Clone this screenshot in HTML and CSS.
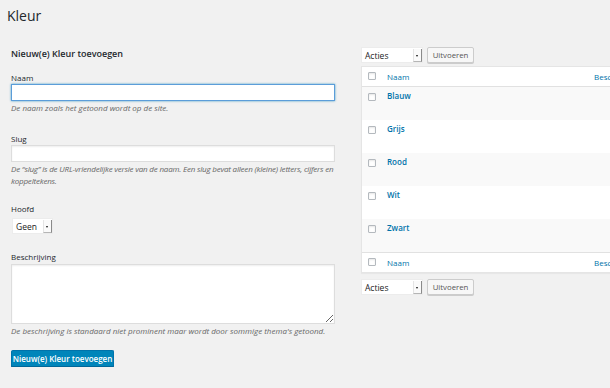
FILE: index.html
```html
<!DOCTYPE html>
<html lang="nl">
<head>
  <meta charset="UTF-8" />
  <meta name="viewport" content="width=device-width, initial-scale=1.0" />
  <title>Kleur</title>
  <link rel="stylesheet" href="styles.css">
</head>
<body>
  <div class="wrap">
    <h1 class="page-title">Kleur</h1>

    <div class="columns">
      <!-- Formulier links -->
      <div class="col-left">
        <h2 class="form-title">Nieuw(e) Kleur toevoegen</h2>

        <div class="field field-name">
          <label class="field-label">Naam</label>
          <input type="text" class="text-input is-focus" />
          <p class="desc">De naam zoals het getoond wordt op de site.</p>
        </div>

        <div class="field field-slug">
          <label class="field-label">Slug</label>
          <input type="text" class="text-input" />
          <p class="desc desc-tight">De “slug” is de URL-vriendelijke versie van de naam. Een slug bevat alleen (kleine) letters, cijfers en<br>koppeltekens.</p>
        </div>

        <div class="field field-parent">
          <label class="field-label">Hoofd</label>
          <div class="select select-parent">
            <span class="select-text">Geen</span>
            <span class="select-arrow"></span>
          </div>
        </div>

        <div class="field field-desc">
          <label class="field-label">Beschrijving</label>
          <textarea class="text-area"></textarea>
          <p class="desc">De beschrijving is standaard niet prominent maar wordt door sommige thema's getoond.</p>
        </div>

        <button class="btn-primary">Nieuw(e) Kleur toevoegen</button>
      </div>

      <!-- Lijst rechts -->
      <div class="col-right">
        <div class="tablenav">
          <div class="select select-bulk">
            <span class="select-text">Acties</span>
            <span class="select-arrow"></span>
          </div>
          <button class="btn">Uitvoeren</button>
        </div>

        <table class="list-table">
          <colgroup>
            <col class="col-cb">
            <col class="col-name">
            <col class="col-desc">
          </colgroup>
          <thead>
            <tr>
              <th class="check"><span class="checkbox"></span></th>
              <th><a href="#">Naam</a></th>
              <th><a href="#">Beschrijving</a></th>
            </tr>
          </thead>
          <tbody>
            <tr class="alt">
              <td class="check"><span class="checkbox"></span></td>
              <td class="name"><a href="#">Blauw</a></td>
              <td></td>
            </tr>
            <tr>
              <td class="check"><span class="checkbox"></span></td>
              <td class="name"><a href="#">Grijs</a></td>
              <td></td>
            </tr>
            <tr class="alt">
              <td class="check"><span class="checkbox"></span></td>
              <td class="name"><a href="#">Rood</a></td>
              <td></td>
            </tr>
            <tr>
              <td class="check"><span class="checkbox"></span></td>
              <td class="name"><a href="#">Wit</a></td>
              <td></td>
            </tr>
            <tr class="alt">
              <td class="check"><span class="checkbox"></span></td>
              <td class="name"><a href="#">Zwart</a></td>
              <td></td>
            </tr>
          </tbody>
          <tfoot>
            <tr>
              <th class="check"><span class="checkbox"></span></th>
              <th><a href="#">Naam</a></th>
              <th><a href="#">Beschrijving</a></th>
            </tr>
          </tfoot>
        </table>

        <div class="tablenav tablenav-bottom">
          <div class="select select-bulk">
            <span class="select-text">Acties</span>
            <span class="select-arrow"></span>
          </div>
          <button class="btn">Uitvoeren</button>
        </div>
      </div>
    </div>
  </div>
</body>
</html>
```
FILE: styles.css
```css
body {
  font-family: 'Open Sans', 'Noto Sans', sans-serif;
  background: #f1f1f1;
  color: #23282d;
  margin: 0;
  padding: 0;
  overflow: hidden;
}

.wrap {
  padding: 0 0 0 7px;
}

.page-title {
  margin: 0;
  padding-top: 6px;
  font-size: 14px;
  line-height: 20px;
  font-weight: 400;
  color: #23282d;
}

.columns {
  display: flex;
  gap: 26px;
  margin-top: 21px;
  padding-left: 4px;
}

.col-left {
  flex: 0 0 324px;
  min-width: 0;
}

.col-right {
  flex: 0 0 420px;
}

/* FORM */
.form-title {
  margin: 1px 0 0;
  font-size: 9px;
  line-height: 12px;
  font-weight: 600;
  color: #23282d;
}

.field {
  display: flex;
  flex-direction: column;
  align-items: flex-start;
}

.field-name { margin-top: 12px; }
.field-slug { margin-top: 19px; }
.field-parent { margin-top: 16px; }
.field-desc { margin-top: 17px; }

.field-label {
  font-size: 8px;
  line-height: 11px;
  color: #23282d;
}

.text-input {
  box-sizing: border-box;
  width: 324px;
  height: 17px;
  margin: 1px 0 0;
  padding: 0 4px;
  border: 1px solid #ddd;
  background: #fff;
  box-shadow: inset 0 1px 2px rgba(0,0,0,0.07);
  outline: none;
  font: inherit;
}

.text-input.is-focus {
  border-color: #5b9dd9;
  box-shadow: 0 0 2px rgba(30,140,190,0.8);
}

.text-area {
  box-sizing: border-box;
  width: 324px;
  height: 60px;
  margin: 2px 0 0;
  border: 1px solid #ddd;
  background: #fff;
  box-shadow: inset 0 1px 2px rgba(0,0,0,0.07);
  outline: none;
  resize: both;
}

.desc {
  margin: 1px 0 0;
  font-size: 8px;
  line-height: 12px;
  font-style: italic;
  color: #666;
}

.desc-tight {
  white-space: nowrap;
  letter-spacing: -0.2px;
}

/* Select */
.select {
  box-sizing: border-box;
  display: flex;
  align-items: center;
  height: 16px;
  background: #fff;
  border: 1px solid #ececec;
  color: #222;
  font-size: 8.5px;
}

.select-parent {
  width: 41px;
  margin-top: 4px;
  margin-left: 1px;
}

.select-bulk {
  width: 62px;
}

.select-text {
  flex: 1;
  padding-left: 3px;
}

.select-arrow {
  position: relative;
  align-self: stretch;
  width: 7px;
  margin: 1px 0 0;
  border-right: 1px solid #8a8a8a;
  border-bottom: 1px solid #b5b5b5;
  border-left: 1px solid #e4e4e4;
  background: #fafafa;
}

.select-arrow::after {
  content: "";
  position: absolute;
  top: 6px;
  left: 2px;
  border-left: 1.5px solid transparent;
  border-right: 1.5px solid transparent;
  border-top: 2px solid #111;
}

/* Buttons */
.btn,
.btn-primary {
  box-sizing: border-box;
  font-family: inherit;
  cursor: pointer;
  border-radius: 2px;
  padding: 0;
}

.btn {
  height: 16px;
  width: 47px;
  background: #f7f7f7;
  border: 1px solid #ccc;
  box-shadow: 0 1px 0 #ccc;
  color: #555;
  font-size: 7.8px;
}

.btn-primary {
  display: block;
  margin-top: 13px;
  height: 17px;
  width: 103px;
  background: #0085ba;
  border: 1px solid #0073aa;
  border-bottom-color: #006799;
  box-shadow: 0 1px 0 #006799;
  color: #fff;
  font-size: 8px;
  font-weight: 600;
}

/* TABLE */
.tablenav {
  display: flex;
  gap: 4px;
  height: 16px;
  margin-bottom: 3px;
}

.tablenav-bottom {
  margin: 6px 0 0;
}

.list-table {
  width: 420px;
  table-layout: fixed;
  border-collapse: separate;
  border-spacing: 0;
  background: #fff;
  border: 1px solid #e5e5e5;
  box-shadow: 0 1px 1px rgba(0,0,0,0.04);
  font-size: 8px;
}

.col-cb { width: 25px; }
.col-name { width: 207px; }

.list-table a {
  color: #0073aa;
  text-decoration: none;
}

.list-table th {
  padding: 4px 0 3px;
  line-height: 12px;
  font-weight: 400;
  text-align: left;
  vertical-align: top;
  white-space: nowrap;
}

.list-table thead th {
  border-bottom: 1px solid #e1e1e1;
}

.list-table tfoot th {
  border-top: 1px solid #e1e1e1;
}

.list-table td {
  padding: 2px 0 18px;
  line-height: 13px;
  vertical-align: top;
}

.list-table td.name a {
  font-weight: 600;
}

.list-table tr.alt td {
  background: #f9f9f9;
}

.list-table th.check {
  padding: 5px 0 0 6px;
}

.list-table td.check {
  padding: 6px 0 0 6px;
}

.checkbox {
  box-sizing: border-box;
  display: block;
  width: 8px;
  height: 8px;
  border: 1px solid #b4b9be;
  border-radius: 1px;
  background: #fff;
  box-shadow: inset 0 1px 2px rgba(0,0,0,0.1);
}
```
